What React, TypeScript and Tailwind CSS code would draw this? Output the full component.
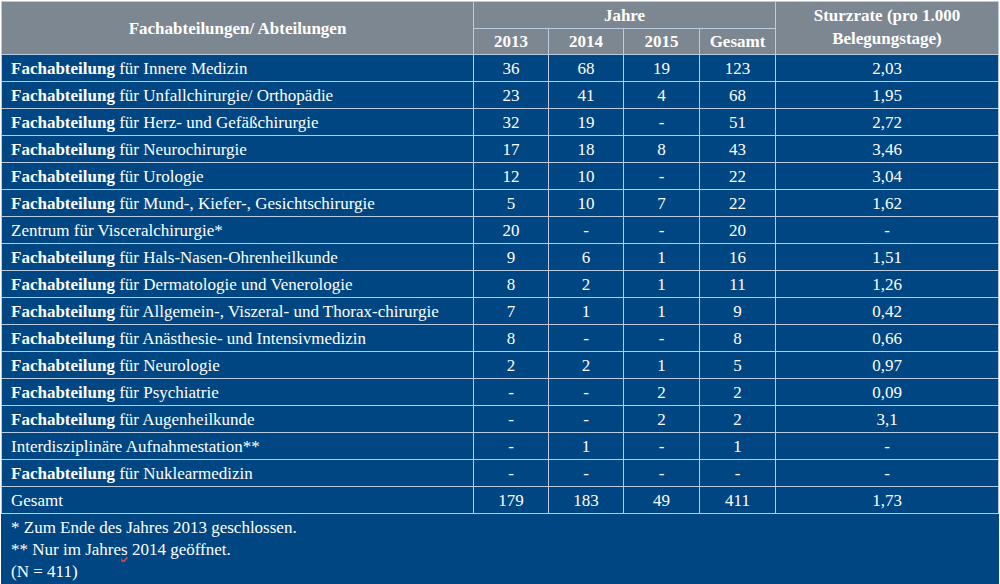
const ROWS: { bold: boolean; name: string; v: string[] }[] = [
  { bold: true, name: 'für Innere Medizin', v: ['36', '68', '19', '123', '2,03'] },
  { bold: true, name: 'für Unfallchirurgie/ Orthopädie', v: ['23', '41', '4', '68', '1,95'] },
  { bold: true, name: 'für Herz- und Gefäßchirurgie', v: ['32', '19', '-', '51', '2,72'] },
  { bold: true, name: 'für Neurochirurgie', v: ['17', '18', '8', '43', '3,46'] },
  { bold: true, name: 'für Urologie', v: ['12', '10', '-', '22', '3,04'] },
  { bold: true, name: 'für Mund-, Kiefer-, Gesichtschirurgie', v: ['5', '10', '7', '22', '1,62'] },
  { bold: false, name: 'Zentrum für Visceralchirurgie*', v: ['20', '-', '-', '20', '-'] },
  { bold: true, name: 'für Hals-Nasen-Ohrenheilkunde', v: ['9', '6', '1', '16', '1,51'] },
  { bold: true, name: 'für Dermatologie und Venerologie', v: ['8', '2', '1', '11', '1,26'] },
  { bold: true, name: 'für Allgemein-, Viszeral- und Thorax-chirurgie', v: ['7', '1', '1', '9', '0,42'] },
  { bold: true, name: 'für Anästhesie- und Intensivmedizin', v: ['8', '-', '-', '8', '0,66'] },
  { bold: true, name: 'für Neurologie', v: ['2', '2', '1', '5', '0,97'] },
  { bold: true, name: 'für Psychiatrie', v: ['-', '-', '2', '2', '0,09'] },
  { bold: true, name: 'für Augenheilkunde', v: ['-', '-', '2', '2', '3,1'] },
  { bold: false, name: 'Interdisziplinäre Aufnahmestation**', v: ['-', '1', '-', '1', '-'] },
  { bold: true, name: 'für Nuklearmedizin', v: ['-', '-', '-', '-', '-'] },
  { bold: false, name: 'Gesamt', v: ['179', '183', '49', '411', '1,73'] },
];

const line = 'border border-[#b9cbe0]';

export default function App() {
  return (
    <div className="h-[584px] w-[1000px] bg-white pl-px pt-px font-['Liberation_Serif'] text-white">
      <table className="w-[997px] table-fixed border-collapse">
        <colgroup>
          <col className="w-[472px]" />
          <col className="w-[75px]" />
          <col className="w-[75px]" />
          <col className="w-[76px]" />
          <col className="w-[76px]" />
          <col className="w-[223px]" />
        </colgroup>
        <thead className="bg-[#7d8791] text-[17px] font-bold">
          <tr className="h-[27px]">
            <th rowSpan={2} className={`${line} leading-none`}>
              Fachabteilungen/ Abteilungen
            </th>
            <th colSpan={4} className={`${line} leading-none`}>
              Jahre
            </th>
            <th rowSpan={2} className={`${line} align-top pt-[2px] leading-[23px]`}>
              Sturzrate (pro 1.000
              <br />
              Belegungstage)
            </th>
          </tr>
          <tr className="h-[26px]">
            <th className={`${line} leading-none`}>2013</th>
            <th className={`${line} leading-none`}>2014</th>
            <th className={`${line} leading-none`}>2015</th>
            <th className={`${line} leading-none`}>Gesamt</th>
          </tr>
        </thead>
        <tbody className="bg-[#004683] text-[17px]">
          {ROWS.map((r) => (
            <tr key={r.name} className="h-[27px]">
              <td className={`${line} pl-[9px] leading-none`}>
                {r.bold && <span className="font-bold">Fachabteilung </span>}
                {r.name}
              </td>
              {r.v.map((x, i) => (
                <td key={i} className={`${line} text-center leading-none`}>
                  {x}
                </td>
              ))}
            </tr>
          ))}
          <tr>
            <td colSpan={6} className="h-[66px] border border-[#004683] pl-[9px] pt-[3px] align-top text-[17px] leading-[22px]">
              <div>* Zum Ende des Jahres 2013 geschlossen.</div>
              <div>
                ** Nur im Jahre
                <span className="underline decoration-[#e04040] decoration-wavy">s</span> 2014 geöffnet.
              </div>
              <div>(N = 411)</div>
            </td>
          </tr>
        </tbody>
      </table>
    </div>
  );
}
